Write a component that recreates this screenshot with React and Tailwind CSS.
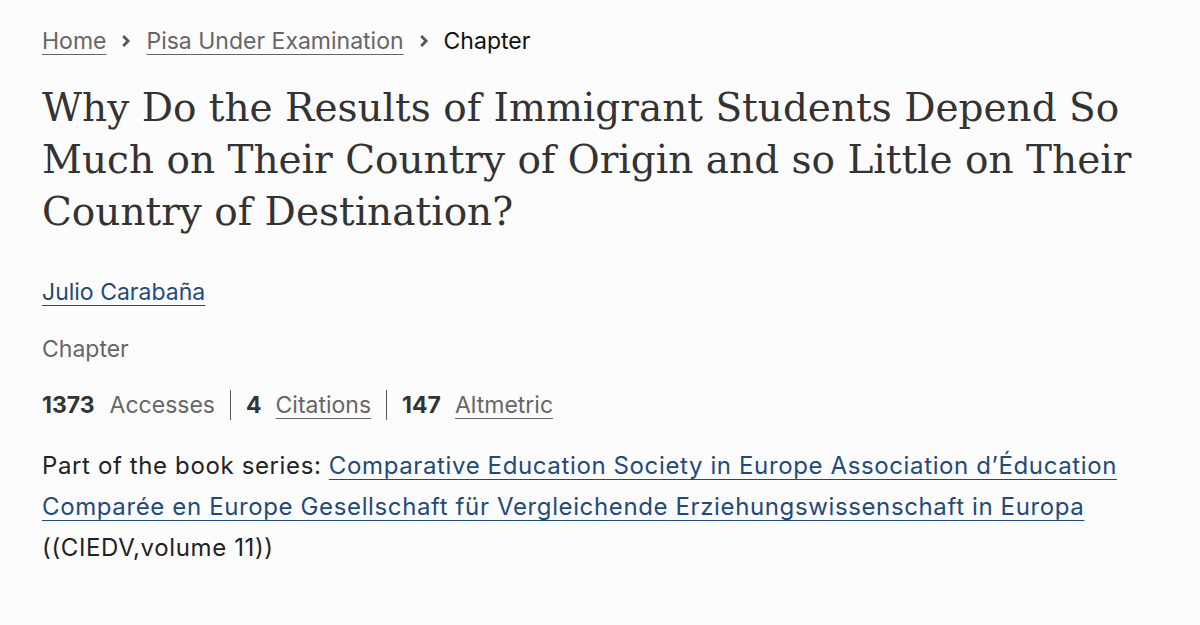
import React from "react";

const sans = { fontFamily: "Inter, 'Noto Sans', sans-serif" };

const Chevron = () => (
  <svg className="mx-[13px] h-[14px] w-[14px] text-[#555]" viewBox="0 0 10 10" fill="none" stroke="currentColor" strokeWidth="2">
    <path d="M3 1.5 6.5 5 3 8.5" />
  </svg>
);

const Divider = () => <span className="mx-[15px] inline-block h-[30px] w-px bg-[#555]" />;

export default function App() {
  return (
    <div className="min-h-[625px] w-[1200px] bg-[#fcfcfc] pl-[42px] pr-[18px] pt-[26px] text-[#222]" style={sans}>
      {/* breadcrumb */}
      <nav className="flex items-center text-[23px] leading-[30px]">
        <a href="#" className="text-[#666] underline underline-offset-[5px] decoration-1">Home</a>
        <Chevron />
        <a href="#" className="text-[#666] underline underline-offset-[5px] decoration-1">Pisa Under Examination</a>
        <Chevron />
        <span className="text-[#111]">Chapter</span>
      </nav>

      {/* title */}
      <h1
        className="mt-[26px] text-[39px] leading-[52px] text-[#333]"
        style={{ fontFamily: "'DejaVu Serif', Georgia, serif" }}
      >
        Why Do the Results of Immigrant Students Depend So Much on Their Country of Origin and so Little on Their Country of Destination?
      </h1>

      {/* author */}
      <div className="mt-[39px] text-[23px] leading-[30px]">
        <a href="#" className="text-[#1f4a7c] underline underline-offset-[5px] decoration-1">Julio Carabaña</a>
      </div>

      <div className="mt-[27px] text-[23px] leading-[30px] text-[#666]">Chapter</div>

      {/* metrics */}
      <div className="mt-[26px] flex items-center text-[23px] leading-[30px]">
        <span className="font-bold text-[#333]">1373</span>
        <span className="ml-[15px] text-[#666]">Accesses</span>
        <Divider />
        <span className="font-bold text-[#333]">4</span>
        <a href="#" className="ml-[14px] text-[#666] underline underline-offset-[5px] decoration-1">Citations</a>
        <Divider />
        <span className="font-bold text-[#333]">147</span>
        <a href="#" className="ml-[14px] text-[#666] underline underline-offset-[5px] decoration-1">Altmetric</a>
      </div>

      {/* series */}
      <p className="mt-[25px] w-[1100px] text-[24px] leading-[41px] tracking-[0.026em] text-[#222]">
        Part of the book series:{" "}
        <a href="#" className="text-[#1f4a7c] underline underline-offset-[5px] decoration-1">
          Comparative Education Society in Europe Association d’Éducation Comparée en Europe Gesellschaft für Vergleichende Erziehungswissenschaft in Europa
        </a>
        <br />
        ((CIEDV,volume 11))
      </p>
    </div>
  );
}
